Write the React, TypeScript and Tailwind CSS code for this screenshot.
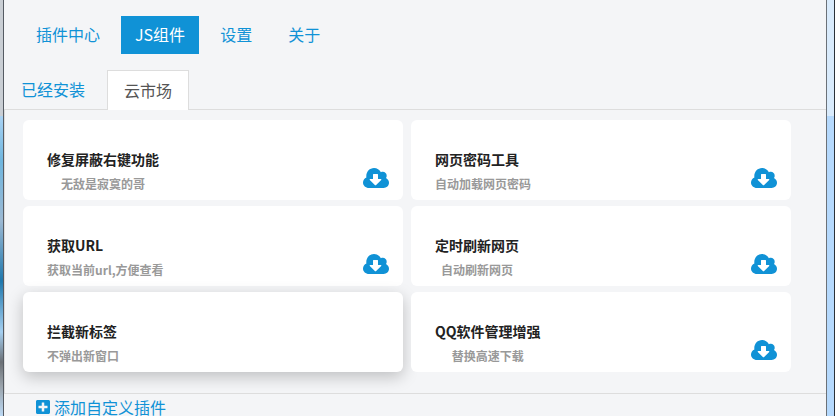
import { FaPlusSquare } from "react-icons/fa";

const navItems = ["插件中心", "JS组件", "设置", "关于"];

const plugins = [
  { title: "修复屏蔽右键功能", desc: "无敌是寂寞的哥", icon: true },
  { title: "网页密码工具", desc: "自动加载网页密码", icon: true },
  { title: "获取URL", desc: "获取当前url,方便查看", icon: true },
  { title: "定时刷新网页", desc: "自动刷新网页", icon: true },
  { title: "拦截新标签", desc: "不弹出新窗口", icon: false, hovered: true },
  { title: "QQ软件管理增强", desc: "替换高速下载", icon: true },
];

function CloudDownload() {
  return (
    <svg width="26" height="20" viewBox="0 0 26 20" className="mb-[6px] shrink-0">
      <path
        fill="#1092d6"
        d="M6 20C2.7 20 0 17.6 0 14.5C0 12.2 1.4 10.3 3.4 9.4C3.3 9 3.3 8.500 3.300 8C3.300 3.600 6.800 0 11 0C14 0 16.600 1.700 17.900 4.200C18.500 3.900 19.100 3.800 19.800 3.800C22 3.800 23.700 5.500 23.700 7.700C23.700 8.600 23.500 9.300 23 10C24.800 11 26 12.800 26 14.800C26 17.700 23.600 20 20.600 20Z"
      />
      <path
        fill="#fff"
        d="M10 6.500C10 6.200 10.200 6 10.500 6H14.500C14.800 6 15 6.200 15 6.500V11H17.800C18.300 11 18.500 11.500 18.200 11.900L12.900 17.200C12.700 17.400 12.300 17.400 12.100 17.200L6.800 11.900C6.500 11.500 6.700 11 7.200 11H10Z"
      />
    </svg>
  );
}

function PluginCard({
  title,
  desc,
  icon,
  hovered,
}: {
  title: string;
  desc: string;
  icon: boolean;
  hovered?: boolean;
}) {
  return (
    <div
      className={`flex h-20 items-end justify-between rounded-md bg-white pb-[6px] pl-6 pr-[14px] ${
        hovered ? "shadow-[0_5px_16px_rgba(0,0,0,0.22)]" : ""
      }`}
    >
      <div className="w-fit">
        <div className="text-sm leading-5 font-semibold text-[#222]">{title}</div>
        <div className="mt-[5px] text-center text-xs leading-5 font-semibold text-[#999]">
          {desc}
        </div>
      </div>
      {icon && <CloudDownload />}
    </div>
  );
}

export default function App() {
  return (
    <div className="flex h-[416px] w-[839px] overflow-hidden bg-white [font-family:'Noto_Sans_CJK_SC',sans-serif]">
      <div className="flex w-[3px] flex-col">
        <div className="h-[116px] bg-[#c9ced4]" />
        <div className="flex-1 bg-[linear-gradient(180deg,#a9d2f3_0%,#6fb6df_15%,#9cb9d3_35%,#1f78ad_55%,#a5cff0_72%,#6b7076_82%,#9aa3ab_90%,#bcd9f4_100%)]" />
      </div>
      <div className="w-px bg-[#555b63]" />

      <main className="flex w-[822px] flex-col bg-[#f4f5f7]">
        <nav className="flex gap-1.5 pl-[17px] pt-4">
          {navItems.map((item) => (
            <a
              key={item}
              className={`h-[38px] text-base leading-[36px] ${
                item === "JS组件"
                  ? "bg-[#1092d6] px-[14px] text-white"
                  : "px-[15px] text-[#1092d6]"
              }`}
            >
              {item}
            </a>
          ))}
        </nav>

        <div className="mt-4 flex h-10 border-b border-[#ddd]">
          <a className="mr-1 pl-[17px] pr-[18px] pt-[7px] text-base leading-6 text-[#1092d6]">
            已经安装
          </a>
          <a className="h-10 border border-b-0 border-[#ddd] bg-white px-4 pt-[7px] text-base leading-6 text-[#555]">
            云市场
          </a>
        </div>

        <div className="h-[283px] border-l border-[#ddd] pl-[18px] pt-2.5">
          <div className="grid grid-cols-[380px_380px] gap-x-2 gap-y-1.5">
            {plugins.map((plugin) => (
              <PluginCard key={plugin.title} {...plugin} />
            ))}
          </div>
        </div>

        <div className="flex flex-1 items-center gap-[3px] border-t border-[#ddd] pl-[31px] pt-[3px] text-base text-[#1092d6]">
          <FaPlusSquare size={16} />
          <span className="leading-4">添加自定义插件</span>
        </div>
      </main>

      <div className="w-px bg-[#6b7178]" />
      <div className="flex w-[7px] flex-col">
        <div className="h-[116px] bg-[#d9ebfc]" />
        <div className="flex-1 bg-[#b5d9fd]" />
      </div>
      <div className="w-px bg-[#2b3138]" />
    </div>
  );
}
